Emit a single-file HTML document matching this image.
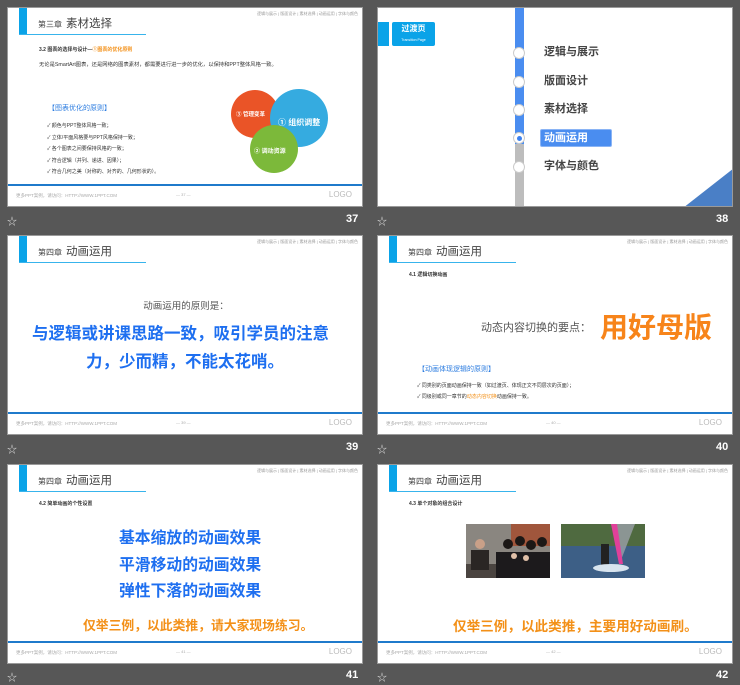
<!DOCTYPE html>
<html><head><meta charset="utf-8"><style>
*{margin:0;padding:0;box-sizing:border-box}
body{width:740px;height:685px;background:#575757;position:relative;overflow:hidden;font-family:"Liberation Sans","Noto Sans CJK SC",sans-serif}
.s{position:absolute;width:356px;height:200px;background:#fff;overflow:hidden;border:1px solid #9a9a9a}
.a{position:absolute;white-space:nowrap}
.bar{position:absolute;left:11px;top:0;width:8px;height:27px;background:#0aa3e8}
.ul{position:absolute;left:11px;top:26px;width:127px;height:1px;background:#38b4ec}
.tt{position:absolute;left:30px;top:7px;color:#444;font-size:11.5px;white-space:nowrap}
.tt small{font-size:8px;margin-right:4px}
.nav{position:absolute;right:4px;top:3px;font-size:4px;color:#999;white-space:nowrap}
.fl{position:absolute;left:0;right:0;top:176px;height:2px;background:#1f7acb}
.ft{position:absolute;left:8px;top:185px;font-size:4.5px;color:#aaa;white-space:nowrap}
.pn{position:absolute;left:168px;top:184px;font-size:4px;color:#aaa}
.logo{position:absolute;right:10px;top:182px;font-size:8px;color:#bbb;letter-spacing:0}
.sub{position:absolute;left:31px;top:35px;font-size:5px;color:#333;font-weight:bold;white-space:nowrap}
.num{position:absolute;color:#fff;font-weight:bold;font-size:11px}
.star{position:absolute;color:#ddd;font-size:10px}
.bl{color:#1e6ff0;font-weight:bold}
.or{color:#f39018;font-weight:bold}
</style></head><body>

<!-- slide 37 -->
<div class="s" style="left:7px;top:7px">
<div class="bar"></div><div class="ul"></div>
<div class="tt"><small>第三章</small>素材选择</div>
<div class="nav">逻辑与展示 | 版面设计 | 素材选择 | 动画运用 | 字体与颜色</div>
<div class="a" style="left:31px;top:38px;font-size:5px;color:#333;font-weight:bold">3.2 图表的选择与设计—<span style="color:#f39018">①图表的优化原则</span></div>
<div class="a" style="left:31px;top:52px;font-size:5.3px;color:#333">无论是SmartArt图表，还是网络的图表素材，都需要进行进一步的优化，以保持和PPT整体风格一致。</div>
<div class="a" style="left:40px;top:95px;font-size:7px;color:#2d7de0">【图表优化的原则】</div>
<div class="a" style="left:39px;top:113px;font-size:5px;color:#333;line-height:11.6px">✓ 颜色与PPT整体风格一致；<br>✓ 立体/平面风格要与PPT风格保持一致；<br>✓ 各个图表之间要保持风格的一致；<br>✓ 符合逻辑（并列、递进、因果）；<br>✓ 符合几何之美（对称的、对齐的、几何形状的）。</div>
<div class="a" style="left:223px;top:82px;width:48px;height:48px;border-radius:50%;background:#ea5427"></div>
<div class="a" style="left:262px;top:81px;width:58px;height:58px;border-radius:50%;background:#35abe0"></div>
<div class="a" style="left:242px;top:117px;width:48px;height:48px;border-radius:50%;background:#7cb93a"></div>
<div class="a" style="left:228px;top:102px;font-size:5.5px;color:#fff;font-weight:bold">③ 管理变革</div>
<div class="a" style="left:270px;top:109px;font-size:8px;color:#fff;font-weight:bold">① 组织调整</div>
<div class="a" style="left:246px;top:138px;font-size:6px;color:#fff;font-weight:bold">② 调动资源</div>
<div class="fl"></div><div class="ft">更多PPT案例，请访问：HTTP://WWW.1PPT.COM</div><div class="pn">— 37 —</div><div class="logo">LOGO</div>
</div>
<div class="star" style="left:7px;top:213px">☆</div><div class="num" style="left:346px;top:213px">37</div>

<!-- slide 38 -->
<div class="s" style="left:377px;top:7px">
<div class="a" style="left:0;top:14px;width:11px;height:24px;background:#0aa3e8"></div>
<div class="a" style="left:14px;top:14px;width:43px;height:24px;background:#0aa3e8;border-radius:2px"></div>
<div class="a" style="left:14px;top:15px;width:43px;text-align:center;font-size:8px;color:#fff;font-weight:bold">过渡页</div>
<div class="a" style="left:14px;top:30px;width:43px;text-align:center;font-size:3.5px;color:#fff">Transition Page</div>
<div class="a" style="left:137px;top:0;width:9px;height:136px;background:#4a8df0"></div>
<div class="a" style="left:137px;top:136px;width:9px;height:64px;background:#bdbdbd"></div>
<div class="a" style="left:135px;top:39px;width:12px;height:12px;border-radius:50%;background:#fff;border:1px solid #ccc"></div>
<div class="a" style="left:135px;top:68px;width:12px;height:12px;border-radius:50%;background:#fff;border:1px solid #ccc"></div>
<div class="a" style="left:135px;top:96px;width:12px;height:12px;border-radius:50%;background:#fff;border:1px solid #ccc"></div>
<div class="a" style="left:135px;top:124px;width:12px;height:12px;border-radius:50%;background:#fff;border:1px solid #ccc"></div>
<div class="a" style="left:139px;top:128px;width:5px;height:5px;border-radius:50%;background:#3d82f0"></div>
<div class="a" style="left:135px;top:153px;width:12px;height:12px;border-radius:50%;background:#fff;border:1px solid #ccc"></div>
<div class="a" style="left:162px;top:121px;width:72px;height:18px;background:#4a8df0;border:1px solid #8ab4f5;border-radius:2px"></div>
<div class="a" style="left:166px;top:30px;font-size:11px;color:#444;line-height:28.5px;font-weight:bold">逻辑与展示<br>版面设计<br>素材选择<br><span style="color:#fff">动画运用</span><br>字体与颜色</div>
<svg class="a" style="left:305px;top:160px" width="51" height="40"><polygon points="51,0 51,40 0,40" fill="#4a7fc6"/></svg>
</div>
<div class="star" style="left:377px;top:213px">☆</div><div class="num" style="left:716px;top:213px">38</div>

<!-- slide 39 -->
<div class="s" style="left:7px;top:235px">
<div class="bar"></div><div class="ul"></div>
<div class="tt"><small>第四章</small>动画运用</div>
<div class="nav">逻辑与展示 | 版面设计 | 素材选择 | 动画运用 | 字体与颜色</div>
<div class="a" style="left:0;width:356px;text-align:center;top:62px;font-size:9.5px;color:#555">动画运用的原则是：</div>
<div class="a bl" style="left:24px;top:84px;font-size:16.5px">与逻辑或讲课思路一致，吸引学员的注意</div>
<div class="a bl" style="left:78px;top:112px;font-size:16.5px">力，少而精，不能太花哨。</div>
<div class="fl"></div><div class="ft">更多PPT案例，请访问：HTTP://WWW.1PPT.COM</div><div class="pn">— 39 —</div><div class="logo">LOGO</div>
</div>
<div class="star" style="left:7px;top:441px">☆</div><div class="num" style="left:346px;top:441px">39</div>

<!-- slide 40 -->
<div class="s" style="left:377px;top:235px">
<div class="bar"></div><div class="ul"></div>
<div class="tt"><small>第四章</small>动画运用</div>
<div class="nav">逻辑与展示 | 版面设计 | 素材选择 | 动画运用 | 字体与颜色</div>
<div class="sub">4.1 逻辑切换动画</div>
<div class="a" style="left:103px;top:83px;font-size:11px;color:#555">动态内容切换的要点：</div>
<div class="a" style="left:222px;top:70px;font-size:28px;color:#f7841a;font-weight:bold">用好母版</div>
<div class="a" style="left:40px;top:128px;font-size:7px;color:#2d7de0">【动画体现逻辑的原则】</div>
<div class="a" style="left:39px;top:145px;font-size:5px;color:#333;line-height:11px">✓ 同类别的页面动画保持一致（如过渡页、体现正文不同层次的页面）；<br>✓ 同级别或同一章节的<span style="color:#f39018">动态内容切换</span>动画保持一致。</div>
<div class="fl"></div><div class="ft">更多PPT案例，请访问：HTTP://WWW.1PPT.COM</div><div class="pn">— 40 —</div><div class="logo">LOGO</div>
</div>
<div class="star" style="left:377px;top:441px">☆</div><div class="num" style="left:716px;top:441px">40</div>

<!-- slide 41 -->
<div class="s" style="left:7px;top:464px">
<div class="bar"></div><div class="ul"></div>
<div class="tt"><small>第四章</small>动画运用</div>
<div class="nav">逻辑与展示 | 版面设计 | 素材选择 | 动画运用 | 字体与颜色</div>
<div class="sub">4.2 简单动画的个性设置</div>
<div class="a bl" style="left:111px;top:61px;font-size:15.8px;line-height:26.5px">基本缩放的动画效果<br>平滑移动的动画效果<br>弹性下落的动画效果</div>
<div class="a or" style="left:75px;top:150px;font-size:12.8px">仅举三例，以此类推，请大家现场练习。</div>
<div class="fl"></div><div class="ft">更多PPT案例，请访问：HTTP://WWW.1PPT.COM</div><div class="pn">— 41 —</div><div class="logo">LOGO</div>
</div>
<div class="star" style="left:7px;top:669px">☆</div><div class="num" style="left:346px;top:669px">41</div>

<!-- slide 42 -->
<div class="s" style="left:377px;top:464px">
<div class="bar"></div><div class="ul"></div>
<div class="tt"><small>第四章</small>动画运用</div>
<div class="nav">逻辑与展示 | 版面设计 | 素材选择 | 动画运用 | 字体与颜色</div>
<div class="sub">4.3 单个对象的组合设计</div>
<svg class="a" style="left:88px;top:59px" width="84" height="54">
<rect width="84" height="54" fill="#8a8680"/><rect x="45" width="39" height="22" fill="#a0563c"/>
<rect y="40" width="84" height="14" fill="#4a4440"/>
<circle cx="14" cy="20" r="5" fill="#c9a088"/><rect x="5" y="26" width="18" height="20" fill="#2a2624"/>
<circle cx="42" cy="20" r="5" fill="#1c1816"/><circle cx="54" cy="17" r="5" fill="#1c1816"/><circle cx="65" cy="21" r="5" fill="#1c1816"/><circle cx="76" cy="18" r="5" fill="#1c1816"/>
<rect x="30" y="28" width="54" height="26" fill="#1c1a1c"/><circle cx="48" cy="32" r="3" fill="#e0c0a8"/><circle cx="60" cy="34" r="3" fill="#e0c0a8"/>
</svg>
<svg class="a" style="left:183px;top:59px" width="84" height="54">
<rect width="84" height="54" fill="#4a6a8c"/><rect width="84" height="22" fill="#4f6a40"/>
<rect y="22" width="84" height="32" fill="#3d5f86"/>
<polygon points="50,0 74,0 60,36" fill="#9aa0a8" opacity=".8"/><polygon points="50,0 56,0 62,40 58,40" fill="#e0409a"/>
<rect x="40" y="20" width="8" height="22" fill="#222"/><ellipse cx="50" cy="44" rx="18" ry="4" fill="#d8e4ee"/>
</svg>
<div class="a or" style="left:75px;top:150px;font-size:13.6px">仅举三例，以此类推，主要用好动画刷。</div>
<div class="fl"></div><div class="ft">更多PPT案例，请访问：HTTP://WWW.1PPT.COM</div><div class="pn">— 42 —</div><div class="logo">LOGO</div>
</div>
<div class="star" style="left:377px;top:669px">☆</div><div class="num" style="left:716px;top:669px">42</div>

</body></html>
